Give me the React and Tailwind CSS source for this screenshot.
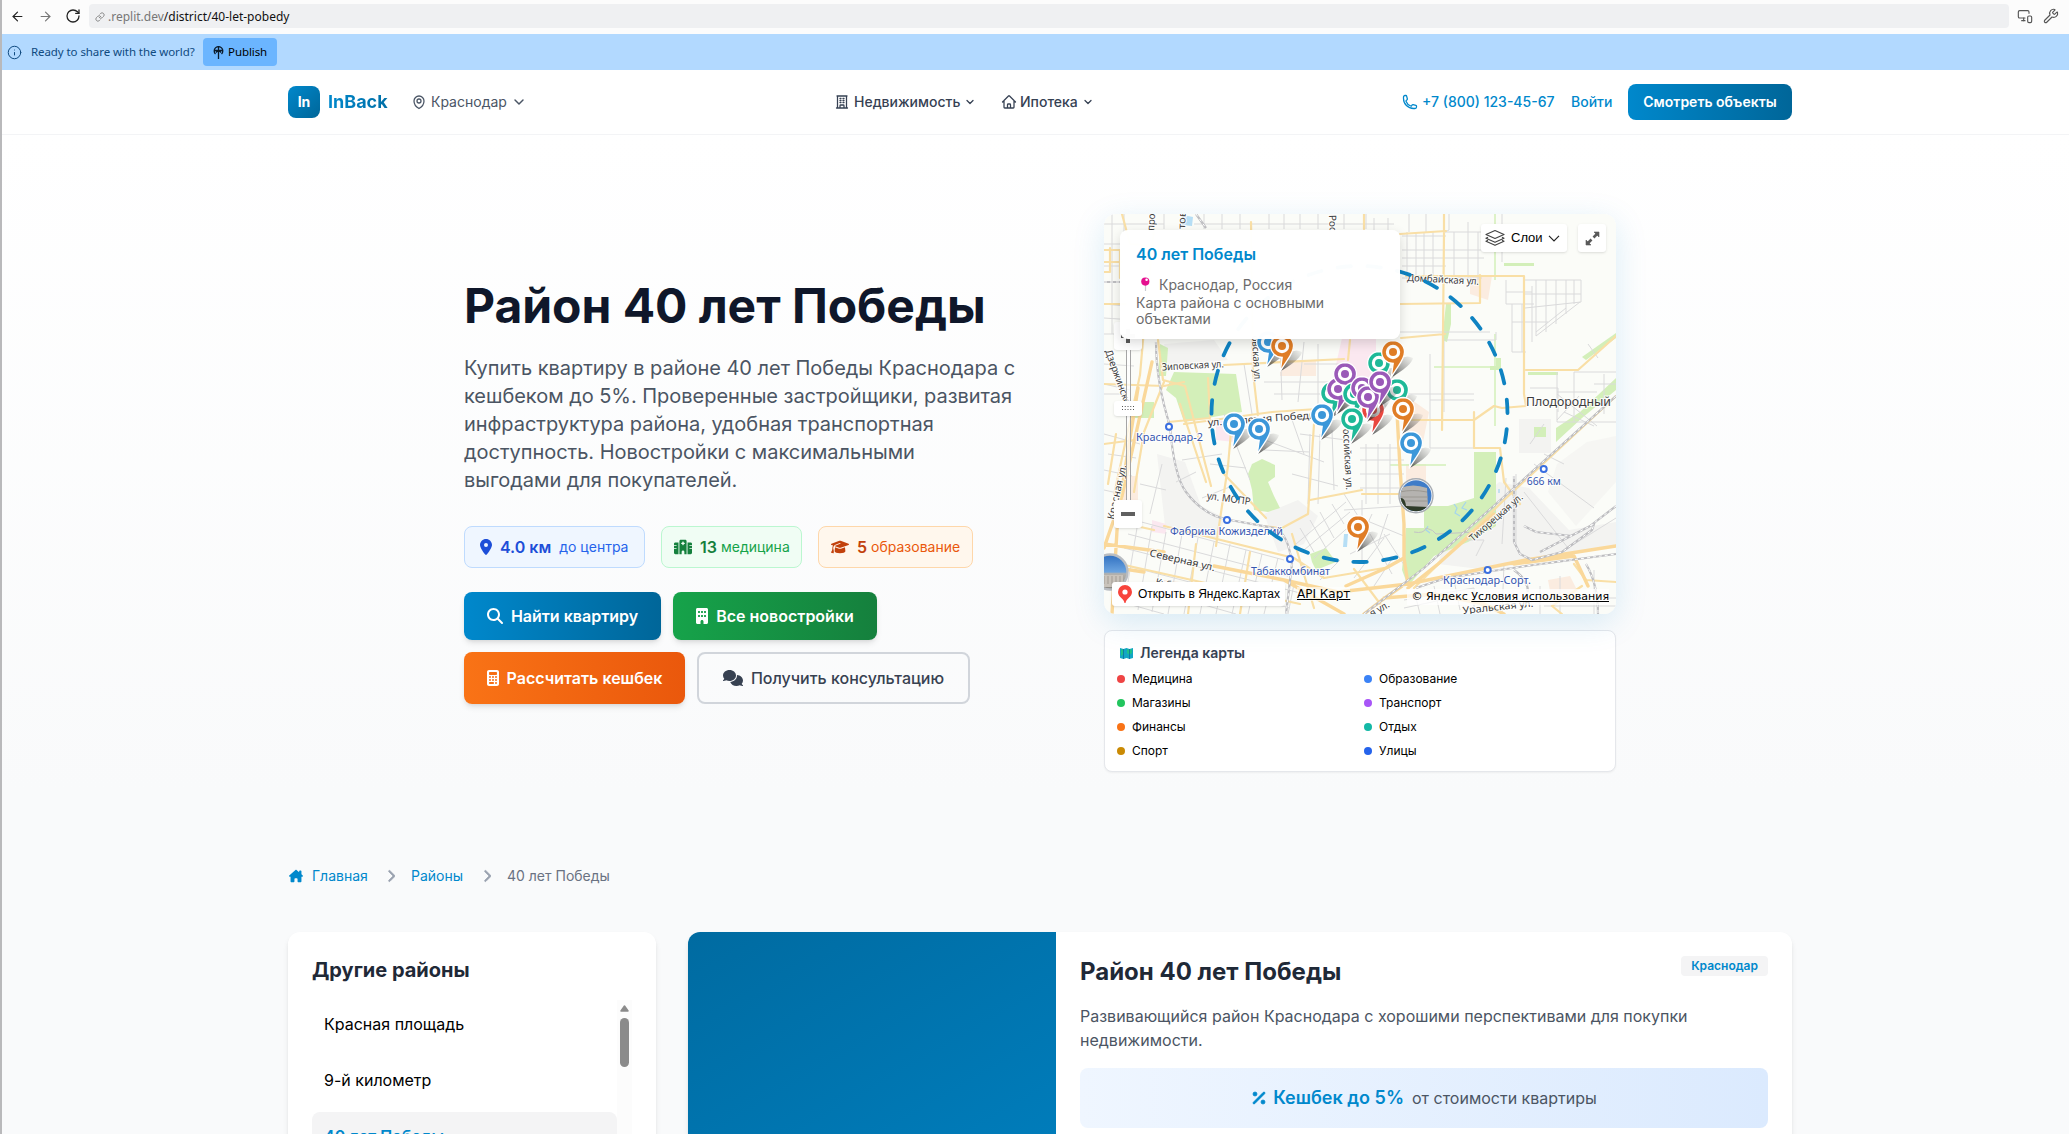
import React from "react";
import { ArrowLeft, ArrowRight, RotateCw, Link, Info, Wrench, MonitorSmartphone, ChevronDown } from "lucide-react";
import {
  FaLocationDot,
  FaHospital,
  FaGraduationCap,
  FaMagnifyingGlass,
  FaBuilding,
  FaCalculator,
  FaComments,
  FaHouseChimney,
  FaChevronRight,
  FaPercent,
} from "react-icons/fa6";
import { HiOutlineMapPin, HiOutlineBuildingOffice, HiOutlineHome, HiOutlinePhone } from "react-icons/hi2";

const BLUE = "#3b97d9";
const ORANGE = "#e07d26";
const TEAL = "#1eb998";
const PURPLE = "#9a59b8";
const RED = "#e8473f";

const pins = [
  [164, 128, BLUE],
  [178, 132, ORANGE],
  [275, 149, TEAL],
  [289, 138, ORANGE],
  [228, 179, TEAL],
  [234, 175, PURPLE],
  [241, 160, PURPLE],
  [250, 180, TEAL],
  [293, 176, TEAL],
  [266, 180, RED],
  [262, 177, PURPLE],
  [258, 174, PURPLE],
  [269, 196, RED],
  [248, 205, TEAL],
  [264, 183, PURPLE],
  [276, 168, PURPLE],
  [299, 195, ORANGE],
  [218, 201, BLUE],
  [130, 210, BLUE],
  [155, 215, BLUE],
  [307, 229, BLUE],
  [254, 313, ORANGE],
];

function Pin({ x, y, color }) {
  return (
    <g transform={`translate(${x} ${y})`}>
      <path d="M-1 25L6 8Q13 2 20 6 19 13-1 25Z" fill="url(#pinShade)" />
      <path
        d="M0-11.5A11.5 11.5 0 0 1 11.500 0C11.500 8 4.500 14-1.800 25.500L.2 11.500A11.500 11.500 0 0 1 0-11.500Z"
        fill={color}
        stroke="#fff"
        strokeWidth="1.3"
      />
      <circle r="7.2" fill="#fff" />
      <circle r="4" fill={color} />
    </g>
  );
}

const stations = [
  [65, 212.7],
  [123, 306],
  [186, 345],
  [439.7, 255],
  [383.7, 356],
];

const stationLabels = [
  [32, 227, 67, "Краснодар-2"],
  [66, 320.5, 113, "Фабрика Кожизделий"],
  [147, 360.7, 79, "Табаккомбинат"],
  [422.7, 270.5, 34, "666 км"],
  [339, 369.7, 88, "Краснодар-Сорт."],
];

const streetLabels = [
  [58, 156.5, 62, -3, "Зиповская ул."],
  [303, 67, 72, 3, "Домбайская ул."],
  [104, 212, 110, -4, "ул. 40-летия Победы"],
  [102.5, 285, 44, 8, "ул. МОПР"],
  [45, 342, 67, 13, "Северная ул."],
  [51, 371, 46, 13, "Кубанская"],
  [10, 306, 56, -77, "Красная ул."],
  [1, 137, 58, 70, "Дзержинско"],
  [239, 215, 61, 87, "оссийская ул."],
  [148, 122, 46, 87, "овская ул."],
  [50, 17, 22, -86, "прос"],
  [81, 15, 18, -88, "тов"],
  [225, 1, 17, 88, "Рос"],
  [369, 328, 67, -41, "Тихорецкая ул."],
  [359, 400, 71, -6, "Уральская ул."],
  [268, 403, 21, -30, "я ул."],
];

function CityMap() {
  return (
    <svg width="512" height="400" viewBox="0 0 512 400" className="block">
      <defs>
        <linearGradient id="pinShade" x1="0" y1="1" x2="1" y2="0">
          <stop offset="0" stopColor="#222" stopOpacity=".75" />
          <stop offset="1" stopColor="#666" stopOpacity=".05" />
        </linearGradient>
        <linearGradient id="sky" x1="0" y1="0" x2="0" y2="1">
          <stop offset="0" stopColor="#2f6fc0" />
          <stop offset=".5" stopColor="#6ba4e0" />
          <stop offset=".55" stopColor="#b4b2ae" />
          <stop offset="1" stopColor="#8a8780" />
        </linearGradient>
        <clipPath id="stadium">
          <circle cx="312" cy="281.7" r="15.5" />
        </clipPath>
      </defs>
      <rect width="512" height="400" fill="#fbfcf8" />

      {/* districts */}
      <g fill="#f3f3f1">
        <path d="M53 240l28 8 16 44 24 12-8 22-52-14z" />
        <path d="M415 205h32v34h-32zM343 318l52-50 30 6 40 42 47-8v24l-128 24-50-6z" />
        <path d="M453 250l30-22 29-6v46l-40 44-28-34z" opacity=".7" />
        <path d="M160 300l34-14 20 16-14 28-26 8zM60 130l50-4 14 20-60 6z" />
      </g>
      <g fill="#fbece0">
        <path d="M18 262h16v36H18zM176 146h36v16h-36zM366 62h22l-4 24-18-6zM302 250h20v20h-20zM444 366l22-4 8 16-26 10zM60 366l30 4-4 20-28-4zM305 184l20 14-6 30-16-6z" />
      </g>
      <path d="M238 124h34v60l-22 10-22-26z" fill="#fbe8f0" />
      <path d="M112 206l18 2v20l-18-2zM48 306l14 4v10l-14-2z" fill="#fbe8f0" />

      {/* parks */}
      <g fill="#d3efb9">
        <path d="M70 158l62 2 6 38-58 10-8-24-10-8z" />
        <path d="M56 130l8 4-2 28h-8zM26 188h24v16H26z" />
        <path d="M148 250l10-5 13 6v12l-7 5 6 14 6 12-12 4-14-2-2-20-4-16z" />
        <path d="M370 238h22v74l-28 16-34 14-26 30-6-16 4-42h18v-22h24l26-8z" />
        <path d="M342 90h5v20l-4 18-5-2zM400 49h30v3h-30zM386 152h6v-8h5v12h-11zM430 213h12v10h-12z" />
        <path d="M452 214l24-16 36-34v12l-34 28-26 24zM424 158h30v3h-30zM206 340l16-6 10 14-20 8-4-8z" />
        <path d="M512 124l-30 22-4-3 34-24z" />
      </g>
      <path d="M330 153h60M391 120v92M286 251h56M391 0v66" stroke="#d3efb9" strokeWidth="1.500" fill="none" />
      <path d="M79 1l10 2-1 9-10-1zM240 320h4l-1 13h-4z" fill="#b6def5" />
      <path d="M350 290l3 4-2 5 5 3M362 288l-4 6 5 2M324 312l-2 4 4 3M395 275v4" fill="none" stroke="#a4d4ee" strokeWidth="1.2" />

      {/* side streets */}
      <g fill="none" stroke="#dadadb" strokeWidth="1">
        <path d="M0 10h60M0 30h58M0 52h42M0 120h60M8 0v120M20 0v90M34 20v80M60 0v15M100 0v15M118 0v15M136 0v15M165 0v15M180 0v15M196 0v15M214 0v15M240 0v15M262 0v15M90 10h200" />
        <path d="M298 22h44M298 36h82M298 44h82M298 52h44M298 64h80M303 18v48M312 18v48M320 18v48M329 18v48M350 18v48M364 8v56M374 18v48M270 4v12M284 4v12M305 0v18M322 0v18M345 0v16l-4 2h37M398 0v48M296 118h90M342 126h50v-8" />
        <path d="M402 66v24h28M408 90v48h14M418 90v48M428 72v56M408 108h36M421 66h56v22l-56 6M432 66v56l44-34M442 66v52M452 66v44M462 66v34M470 66v24M402 78h26M421 80h56M432 118l30-24" />
        <path d="M426 174h28v24M453 158v50h59M453 178h40M470 158v50M490 170h22M440 210l-14 20M470 158h42M475 182l-22 24M484 130l10 14M453 180l40 32M460 198l30 14M500 160v40" />
        <path d="M326 140v94h44M340 124v74M326 186h44M302 180h68M256 234h44M256 246h44M256 260h44M262 230v60M274 230v60M286 230v60M256 274h44M240 296l60-4M256 304l44 18M268 300l-10 22M284 300l-10 30M258 286v60" />
        <path d="M66 56h50M200 128l-6 60M160 168h70M170 180h56M140 150l8 50M200 150h40M214 130v66M176 126l2 60M186 200l14 40M196 220l46 6M150 222l70 26M188 260l46 12M206 220l-2 70M216 220l-2 70M228 216l2 60M160 236l46 2M120 200l26 66M106 250l36 4" />
        <path d="M78 246l40-6M92 258l-20 10M98 284l30-12M46 300l12-50M36 270l26 6M0 220l36 10M4 240l28 4M0 256l28 6M0 276l18 4M0 170l26 6M0 180h20M0 150l30 2M0 104l30 2M0 90l44 4" />
        <path d="M30 306l150 40M24 320l160 42M20 334l180 46M16 350l170 44M12 366l120 34M10 386l50 14M48 312l-14 84M62 318l-14 80M78 320l-14 80M94 324l-14 76M110 328l-14 72M126 330l-14 70M142 336l-14 64M158 340l-14 60M174 344l-14 56M190 370l-6 30M34 308l-14 84" />
        <path d="M192 330l50-42M200 336l46-38M210 344l40-36M196 314l14 24M206 306l16 28M216 298l14 26M228 290l12 20M240 280l14 22M266 320l22 40M280 320l22 34M246 340l40-20M270 372l20-30M250 364l30-40M216 366l20-20M300 386l70-12M300 394l56-12M310 376l6 24M330 372l6 28M350 366l6 30M370 374v26M400 350l-2 50M412 260v72M420 278l44 56M464 334l48-30M430 250l60 44M440 240l20 10M402 264l-4 66M356 326h24l-8 16M436 372v28M456 362v38M490 356v44M430 384h82M440 392h72" />
        <path d="M310 318q10 2 12-4 8 2 10 6l40-2" stroke="#c3c3c6" />
      </g>

      {/* main roads */}
      <g fill="none" strokeLinecap="round" strokeLinejoin="round">
        <g stroke="#f9dfa6" strokeWidth="2.2">
          <path d="M0 36h16v28M0 48h18M0 90h22M6 34v24H0M50 15l-10 100-4 46-26 120M54 126l5 40 22 6 26 100M0 170l60 2 20-4M18 0l8 30 24 2M60 168l-20 50-10 60M76 190l6 20M64 208l42-4-2-40" />
          <path d="M147 8l2 150 8 70M120 151l120-6M80 210l88-12 60-4M82 208l20 60M128 206l-4 46-12 80M120 260l42 44M246 126l-2 20M260 0v15M4 270l8-50" />
          <path d="M340 0v20l-2 196M296 20l46-3M296 90l80-1v-28M302 62h118v118l2 12-24 2-8-2-20 14H300M297 124l44-4M0 230l30-4M370 198v36h26l4 34 16 22M422 156h52l38-34M258 280h40" />
          <path d="M206 286l52-10M210 210l-6 90-26 14-20-2M188 320l22 74M60 312l130 32 30 20 60-10M14 308l36 8M92 330l-8 70M146 338l-10 62M16 350l180 40M250 355l30 40" />
          <path d="M470 350l12 16 30 2M478 372l-30 20 10 8M310 374l90-88 112-104" />
        </g>
        <g stroke="#fad89a" strokeWidth="3.4">
          <path d="M48 148L18 282 0 334M34 174L14 300 8 400M0 330l60 8M110 352l70 14 54 12 70-8 118-24 90-14M292 180l4 74 4 56v34l-18 10-40 18M300 344l4 26M304 374l30-24 56-50M410 350l60-8 14 30M280 384l50-4 50 10 20 10M298 372l-20 14-18 14M0 352l40 6M180 366l60 34" />
        </g>
      </g>

      {/* railways */}
      <g fill="none">
        <g stroke="#bdbdc0" strokeWidth="2.2">
          <path d="M52 128q0 40 14 84 4 50 16 66 18 24 44 28l44 8q14 4 18 36l-6 50M0 68h20M92 0l10 14" />
          <path d="M260 400l60-46 90-80L512 182M312 374l30-10 80-12 90-12M410 262v66l6 12 12 6 30-8 30-22 2-6-54 28M420 312l12 6 36 4M486 312l26-20M482 350q12 20 12 50M410 356q14 10 14 22" />
        </g>
        <g stroke="#fff" strokeWidth="1" strokeDasharray="3 3">
          <path d="M52 128q0 40 14 84 4 50 16 66 18 24 44 28l44 8q14 4 18 36l-6 50M0 68h20M92 0l10 14" />
          <path d="M260 400l60-46 90-80L512 182M312 374l30-10 80-12 90-12M410 262v66l6 12 12 6 30-8 30-22 2-6-54 28M420 312l12 6 36 4M486 312l26-20M482 350q12 20 12 50M410 356q14 10 14 22" />
        </g>
      </g>

      {/* labels */}
      <g fontFamily="'Noto Sans', sans-serif" fontSize="11.5" stroke="#fff" strokeWidth="2.2" strokeOpacity=".8" paintOrder="stroke">
        {stationLabels.map(([x, y, w, t]) => (
          <text key={t} x={x} y={y} textLength={w} fill="#3556b0" lengthAdjust="spacingAndGlyphs">
            {t}
          </text>
        ))}
        {streetLabels.map(([x, y, w, r, t]) => (
          <text key={t} transform={`translate(${x} ${y}) rotate(${r})`} textLength={w} fontSize="10" fill="#3c3c3c" lengthAdjust="spacingAndGlyphs">
            {t}
          </text>
        ))}
        <text x="422" y="191.5" fontSize="13" textLength="85" fill="#3c3c3c" lengthAdjust="spacingAndGlyphs">
          Плодородный
        </text>
      </g>
      {stations.map(([x, y]) => (
        <circle key={x} cx={x} cy={y} r="3" fill="#fff" stroke="#3a6fe0" strokeWidth="2" />
      ))}

      <circle cx="255.5" cy="200" r="148" fill="none" stroke="#0f83c2" strokeWidth="3.8" strokeLinecap="round" strokeDasharray="13.5 16.5" strokeDashoffset="-15.1" />

      {/* photo markers */}
      <g>
        <circle cx="312" cy="281.7" r="17" fill="#fff" stroke="#a8adb3" strokeWidth="1.4" />
        <g clipPath="url(#stadium)">
          <rect x="296" y="266" width="32" height="32" fill="#3f7cc8" />
          <path d="M296 274q13-5 27 0l1 20h-28z" fill="#b5b3b0" />
          <path d="M296 278q12-3 27 0M296 283h28M296 287h28" stroke="#9b9892" fill="none" />
          <path d="M296 284q5-1 6 8l22 1 4-2v8h-32z" fill="#2f3b28" />
        </g>
        <circle cx="6" cy="358" r="17.5" fill="url(#sky)" stroke="#b9bdc2" strokeWidth="2.4" />
        <path d="M-8 361h27v8l-6 4H-8z" fill="#c9c3bb" />
        <path d="M-4 362v8M0 362v8M4 362v8M8 362v8M12 362v8M16 362v7" stroke="#a39d95" />
      </g>

      {/* object pins */}
      {pins.map(([x, y, c], i) => (
        <Pin key={i} x={x} y={y} color={c} />
      ))}
    </svg>
  );
}

function MapCard() {
  return (
    <div className="relative z-10 h-[400px] w-[512px] rounded-xl shadow-[0_8px_32px_rgba(0,136,204,0.15)]">
      <div className="h-full overflow-hidden rounded-xl">
        <CityMap />
      </div>

      {/* zoom control */}
      <div className="absolute top-[108px] left-[10px] flex h-[206px] w-7 flex-col items-center">
        <div className="flex size-7 shrink-0 items-center justify-center rounded-[3px] bg-white shadow">
          <svg width="14" height="14" viewBox="0 0 14 14">
            <path d="M0 7h14M7 0v14" stroke="#5a5a5a" strokeWidth="4" />
          </svg>
        </div>
        <div className="w-[5px] flex-1 border-x border-[#a5a5a5] bg-white/70" />
        <div className="flex size-7 shrink-0 items-center justify-center rounded-[3px] bg-white shadow">
          <div className="h-1 w-3.5 bg-[#606060]" />
        </div>
        <div className="absolute top-[79px] flex h-[15px] w-7 items-center justify-center rounded-[3px] bg-white shadow">
          <svg width="12" height="5" viewBox="0 0 12 5">
            <path d="M0 .5h12M0 3.500h12" stroke="#555" strokeDasharray="1 1.75" />
          </svg>
        </div>
      </div>

      <div className="absolute top-4 left-4 h-[109px] w-[280px] rounded-lg bg-white/98 px-4 pt-3 shadow-[0_4px_12px_rgba(0,0,0,0.15)]">
        <div className="text-base leading-6 font-semibold text-[#0088cc]">40 лет Победы</div>
        <div className="mt-2.5 flex items-center text-sm leading-[18px] text-[#6b6b6b]">
          <svg width="23" height="16" viewBox="0 0 23 16" className="shrink-0">
            <path d="M9.500 7v7" stroke="#c9ccd0" strokeWidth="1.2" />
            <circle cx="9.3" cy="4.6" r="4.1" fill="#e5108f" />
            <circle cx="10.6" cy="2.8" r="1.3" fill="#fff" />
          </svg>
          Краснодар, Россия
        </div>
        <div className="pt-px text-sm leading-4 text-[#6b6b6b]">
          Карта района с основными
          <br />
          объектами
        </div>
      </div>

      <div className="absolute top-[10px] right-[10px] flex gap-[11px] font-['Liberation_Sans',sans-serif]">
        <div className="flex h-7 w-[86px] items-center rounded-[3px] bg-white pl-1 text-[13px] text-black shadow">
          <svg width="20" height="18" viewBox="0 0 20 18" fill="none" stroke="#444" strokeWidth="1.2" strokeLinejoin="round">
            <path d="M1 5.500L10 1.500l9 4-9 4zM3 8.300l-2 1 9 4 9-4-2-1M3 11.300l-2 1 9 4 9-4-2-1" />
          </svg>
          <span className="ml-1.5">Слои</span>
          <svg width="12" height="7" viewBox="0 0 12 7" className="ml-[5px]" fill="none" stroke="#222" strokeWidth="1.2">
            <path d="M1 .8l5 5 5-5" />
          </svg>
        </div>
        <div className="flex size-7 items-center justify-center rounded-[3px] bg-white shadow">
          <svg width="15" height="15" viewBox="0 0 15 15" fill="#5a5a5a" stroke="#5a5a5a">
            <path d="M9 1h5v5zM1 9v5h5z" strokeWidth=".6" />
            <path d="M8.500 6.500l4-4M6.500 8.500l-4 4" strokeWidth="2.6" />
          </svg>
        </div>
      </div>

      <div className="absolute bottom-2 left-2 flex h-6 w-[173px] items-center rounded-[3px] bg-white pl-1.5 font-['Liberation_Sans',sans-serif] text-xs whitespace-nowrap text-black shadow">
        <svg width="14" height="18" viewBox="0 0 14 18" className="mr-1.5 shrink-0">
          <path d="M7 0a7 7 0 0 1 7 7c0 3-2 4.800-3.600 6.300C9 14.600 8 16 7.500 18h-1C6 16 5 14.600 3.600 13.300 2 11.800 0 10 0 7a7 7 0 0 1 7-7Z" fill="#f8443c" />
          <circle cx="7" cy="7" r="2.6" fill="#fff" />
        </svg>
        Открыть в Яндекс.Картах
      </div>
      <div className="absolute bottom-[13px] left-[193px] bg-white/60 font-['DejaVu_Sans',sans-serif] text-xs leading-[14px] whitespace-nowrap text-black underline">API Карт</div>
      <div className="absolute right-[7px] bottom-[9px] bg-white/75 pl-1 font-['DejaVu_Sans',sans-serif] text-[11px] leading-4 whitespace-nowrap text-black">
        © Яндекс <span className="underline">Условия использования</span>
      </div>
    </div>
  );
}

const legend = [
  ["Медицина", "bg-[#ef4444]"],
  ["Образование", "bg-[#3b82f6]"],
  ["Магазины", "bg-[#22c55e]"],
  ["Транспорт", "bg-[#a855f7]"],
  ["Финансы", "bg-[#f97316]"],
  ["Отдых", "bg-[#14b8a6]"],
  ["Спорт", "bg-[#ca8a04]"],
  ["Улицы", "bg-[#2563eb]"],
];

function Legend() {
  return (
    <div className="mt-4 h-[142px] rounded-lg border border-gray-200 bg-white px-3 pt-3 shadow-xs">
      <div className="flex h-5 items-center pl-[3px] text-sm font-semibold text-gray-700">
        <svg width="13" height="12" viewBox="0 0 13 12" className="mr-[7px]">
          <path d="M0 1l3.500 1L6.500 1l3 1L13 1v10l-3.500 1-3-1-3 1L0 11z" fill="#12a6c4" />
          <path d="M1 2l2.500 1v4L1 9zM7 2l2.500 1 2.500-1v4L9.500 8 7 6z" fill="#1fc28a" />
          <path d="M3.500 2v10M9.500 2v10" stroke="#0c6f9c" strokeWidth=".8" />
        </svg>
        Легенда карты
      </div>
      <div className="mt-2 grid grid-cols-2 gap-x-2 gap-y-2 text-xs text-black">
        {legend.map(([name, dot]) => (
          <div key={name} className="flex h-4 items-center">
            <span className={"mr-[7px] size-2 rounded-full " + dot} />
            {name}
          </div>
        ))}
      </div>
    </div>
  );
}

function BrowserChrome() {
  return (
    <div className="font-['Noto_Sans',sans-serif]">
      <div className="flex h-[34px] items-center bg-[#fcfcfc] pb-0.5 pl-2">
        <ArrowLeft className="size-[15px] text-[#222]" strokeWidth={1.9} />
        <ArrowRight className="ml-[13px] size-[15px] text-[#777]" strokeWidth={1.9} />
        <RotateCw className="ml-3 size-[16px] text-[#222]" strokeWidth={1.9} />
        <div className="ml-2 flex h-6 w-[1920px] items-center rounded bg-[#eff0f2] pt-px pl-1.5 text-xs">
          <Link className="mr-[3px] size-[10px] text-[#777]" strokeWidth={2} />
          <span className="text-[#777]">.replit.dev</span>
          <span className="text-[#111]">/district/40-let-pobedy</span>
        </div>
        <MonitorSmartphone className="ml-2 size-4 text-[#555]" strokeWidth={1.7} />
        <Wrench className="ml-2.5 size-4 text-[#555]" strokeWidth={1.7} />
      </div>
      <div className="flex h-9 items-center bg-[#b2d9ff] pl-[5px] text-[11.5px] tracking-[-0.08px] text-[#0f4a80]">
        <Info className="size-[15px] shrink-0" strokeWidth={1.6} />
        <span className="ml-[9px] w-[172px] shrink-0 whitespace-nowrap">Ready to share with the world?</span>
        <div className="flex h-7 w-[74px] items-center rounded bg-[#6bb5ff] pl-2.5 text-black">
          <svg width="11" height="13" viewBox="0 0 11 13" fill="none" stroke="#0a1a2a" className="mr-1">
            <path d="M2.500 8A4.300 4.300 0 1 1 8.500 8M1.500 4.500h8M5.500 4v9M3 6.500l2.500-2.500L8 6.500M5.500.5v3" strokeWidth="1.300" />
          </svg>
          Publish
        </div>
      </div>
    </div>
  );
}

function Header() {
  return (
    <header className="flex h-[65px] items-center border-b border-gray-100 bg-white pl-[286px] text-sm">
      <div className="flex size-8 items-center justify-center rounded-lg bg-gradient-to-br from-[#0088cc] to-[#006699] text-sm font-bold text-white">In</div>
      <div className="ml-2 w-[83px] bg-gradient-to-r from-[#0088cc] to-[#006699] bg-clip-text text-lg font-bold text-transparent">InBack</div>
      <div className="flex w-[423px] items-center text-gray-600">
        <HiOutlineMapPin className="mr-1 size-4" strokeWidth={1.9} />
        Краснодар
        <ChevronDown className="ml-1 size-4" strokeWidth={2.2} />
      </div>
      <div className="flex w-[167px] items-center font-medium text-gray-700">
        <HiOutlineBuildingOffice className="mr-1 size-4" strokeWidth={1.9} />
        Недвижимость
        <ChevronDown className="ml-1 size-3" strokeWidth={2.6} />
      </div>
      <div className="flex w-[401px] items-center font-medium text-gray-700">
        <HiOutlineHome className="mr-[3px] size-4" strokeWidth={1.9} />
        Ипотека
        <ChevronDown className="ml-1 size-3" strokeWidth={2.6} />
      </div>
      <div className="flex w-[169px] items-center font-medium text-[#0088cc]">
        <HiOutlinePhone className="mr-1 size-4" strokeWidth={1.9} />
        +7 (800) 123-45-67
      </div>
      <div className="w-[57px] font-medium text-[#0088cc]">Войти</div>
      <div className="flex h-9 w-[164px] items-center justify-center rounded-lg bg-gradient-to-r from-[#0088cc] to-[#006699] font-semibold whitespace-nowrap text-white">Смотреть объекты</div>
    </header>
  );
}

function Hero() {
  return (
    <section className="flex h-[661px] items-start gap-16 bg-gradient-to-b from-white to-[#f9fafb] pt-[79px] pl-[462px]">
      <div className="w-[576px] pt-[62px]">
        <h1 className="text-5xl leading-[60px] font-bold tracking-[-0.05px] whitespace-nowrap text-[#0f172a]">Район 40 лет Победы</h1>
        <p className="mt-[18px] text-xl leading-7 tracking-[-0.03px] text-[#4b5563]">
          Купить квартиру в районе 40 лет Победы Краснодара с
          <br />
          кешбеком до 5%. Проверенные застройщики, развитая
          <br />
          инфраструктура района, удобная транспортная
          <br />
          доступность. Новостройки с максимальными
          <br />
          выгодами для покупателей.
        </p>
        <div className="mt-8 flex gap-4 text-sm">
          <div className="flex h-[42px] w-[181px] items-center rounded-lg border border-[#bfdbfe] bg-[#eff6ff] pl-[15px] text-[#2563eb]">
            <FaLocationDot className="mr-2 h-4 w-3 text-[#1d4ed8]" />
            <span className="mr-2 text-base font-semibold text-[#1d4ed8]">4.0 км</span>до центра
          </div>
          <div className="flex h-[42px] w-[141px] items-center rounded-lg border border-[#bbf7d0] bg-[#f0fdf4] pl-3 text-[#16a34a]">
            <FaHospital className="mr-2 h-4 w-[18px] text-[#15803d]" />
            <span className="mr-1 text-base font-semibold text-[#15803d]">13</span>медицина
          </div>
          <div className="flex h-[42px] w-[155px] items-center rounded-lg border border-[#fed7aa] bg-[#fff7ed] pl-3 text-[#ea580c]">
            <FaGraduationCap className="mr-2 h-4 w-[18px] text-[#c2410c]" />
            <span className="mr-1 text-base font-semibold text-[#c2410c]">5</span>образование
          </div>
        </div>
        <div className="mt-6 flex gap-3 text-base font-semibold text-white">
          <div className="flex h-12 w-[197px] items-center justify-center rounded-lg bg-[linear-gradient(to_right,#0088cc,#006699)] shadow-md">
            <FaMagnifyingGlass className="mr-2" />
            Найти квартиру
          </div>
          <div className="flex h-12 w-[204px] items-center justify-center rounded-lg bg-[linear-gradient(to_right,#16a34a,#15803d)] shadow-md">
            <FaBuilding className="mr-2 h-4 w-3" />
            Все новостройки
          </div>
        </div>
        <div className="mt-3 flex gap-3 text-base font-semibold text-white">
          <div className="flex h-[52px] w-[221px] items-center justify-center rounded-lg bg-[linear-gradient(to_right,#f97316,#ea580c)] shadow-md">
            <FaCalculator className="mr-2 h-4 w-3" />
            Рассчитать кешбек
          </div>
          <div className="flex h-[52px] w-[273px] items-center justify-center rounded-lg border-2 border-[#d1d5db] font-medium text-[#374151]">
            <FaComments className="mr-2 h-5 w-5" />
            Получить консультацию
          </div>
        </div>
      </div>
      <div className="w-[512px]">
        <MapCard />
        <Legend />
      </div>
    </section>
  );
}

function Districts() {
  return (
    <aside className="h-[300px] w-[368px] rounded-xl bg-white p-6 shadow-md">
      <h2 className="text-xl leading-7 font-bold text-[#1f2937]">Другие районы</h2>
      <div className="mt-4 flex">
        <div className="w-[305px] space-y-2 text-base text-black">
          <div className="flex h-12 items-center px-3">Красная площадь</div>
          <div className="flex h-12 items-center px-3">9-й километр</div>
          <div className="flex h-12 items-center rounded-lg bg-[#f4f4f5] px-3 font-semibold text-[#0088cc]">40 лет Победы</div>
        </div>
        <div className="flex h-[200px] w-[15px] flex-col items-center bg-[#fcfcfc] pt-[5px]">
          <svg width="9" height="7" viewBox="0 0 9 7">
            <path d="M4.500 1L8 6H1z" fill="#8b8b8b" stroke="#8b8b8b" strokeWidth="1.500" strokeLinejoin="round" />
          </svg>
          <div className="mt-1.5 h-[49px] w-[9px] rounded-full bg-[#8b8b8b]" />
        </div>
      </div>
    </aside>
  );
}

function DistrictCard() {
  return (
    <article className="flex h-[300px] w-[1104px] overflow-hidden rounded-xl bg-white shadow-md">
      <div className="w-[368px] bg-[linear-gradient(150deg,#006ba1,#0080c0)]" />
      <div className="flex-1 p-6">
        <div className="flex items-start justify-between">
          <h3 className="text-2xl leading-8 font-bold text-[#1f2937]">Район 40 лет Победы</h3>
          <span className="flex h-5 items-center rounded bg-[#f4f4f5] px-2.5 text-xs font-semibold text-[#0088cc]">Краснодар</span>
        </div>
        <p className="mt-4 w-[640px] text-base leading-6 text-[#4b5563]">Развивающийся район Краснодара с хорошими перспективами для покупки недвижимости.</p>
        <div className="mt-4 flex h-[60px] items-center justify-center rounded-lg bg-[linear-gradient(to_right,#eff6ff,#dbeafe)]">
          <FaPercent className="mr-1.5 size-4 text-[#0088cc]" stroke="currentColor" strokeWidth={24} />
          <span className="text-lg font-semibold text-[#0088cc]">Кешбек до 5%</span>
          <span className="ml-2 text-base text-[#4b5563]">от стоимости квартиры</span>
        </div>
      </div>
    </article>
  );
}

export default function App() {
  return (
    <div className="h-[1134px] w-[2069px] overflow-hidden border-l-2 border-[#b9b9bb] bg-[#f9fafb] font-['Inter',sans-serif]">
      <BrowserChrome />
      <Header />
      <Hero />
      <nav className="mt-[70px] flex h-5 items-center pl-[286px] text-sm text-[#0088cc]">
        <FaHouseChimney className="mr-2 size-4 p-px" />
        <span className="w-[75px]">Главная</span>
        <FaChevronRight className="mr-4 h-3.5 w-2 text-gray-400" stroke="currentColor" strokeWidth={30} />
        <span className="w-[72px]">Районы</span>
        <FaChevronRight className="mr-4 h-3.5 w-2 text-gray-400" stroke="currentColor" strokeWidth={30} />
        <span className="text-gray-500">40 лет Победы</span>
      </nav>
      <main className="mt-[46px] flex gap-8 pl-[286px]">
        <Districts />
        <DistrictCard />
      </main>
    </div>
  );
}
